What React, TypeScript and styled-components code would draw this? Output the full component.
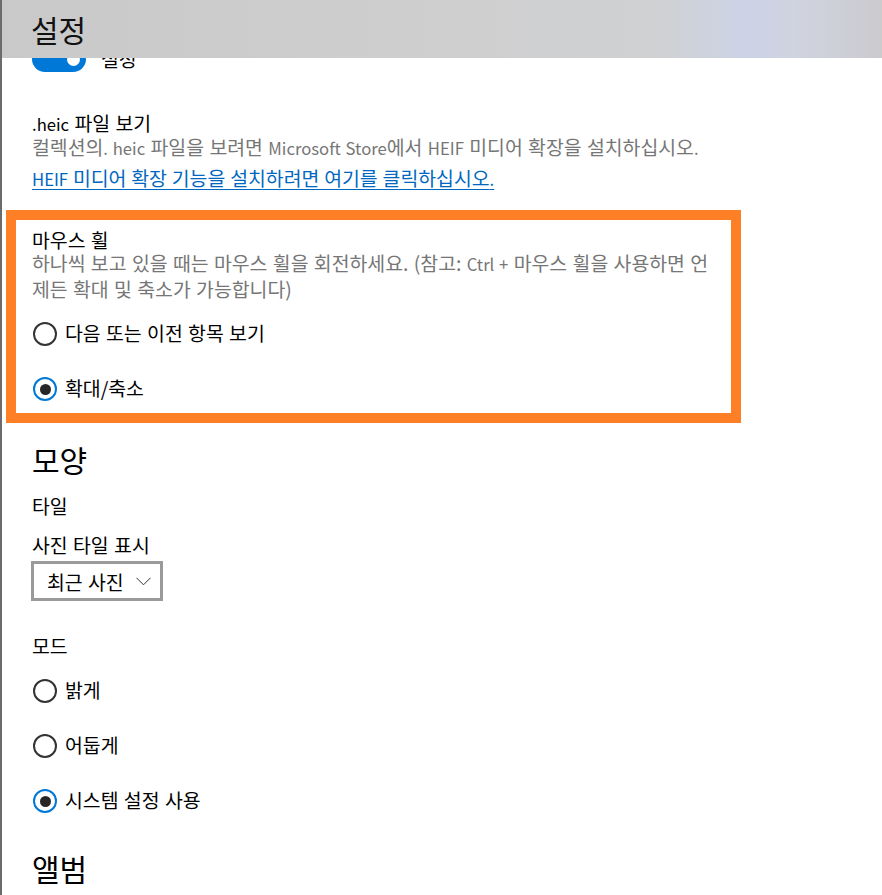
import React from "react";
import styled, { createGlobalStyle } from "styled-components";

const Global = createGlobalStyle`
  html, body { margin: 0; padding: 0; background: #ffffff; }
  body { font-family: "Noto Sans CJK KR", "Noto Sans", sans-serif; color: #000; }
`;

const Page = styled.div`
  min-height: 895px;
  border-left: 2px solid #6b6b6b;
  background: #fff;
  position: relative;
  overflow: hidden;
`;

const Header = styled.header`
  position: absolute;
  top: 0;
  left: 0;
  right: 0;
  height: 58px;
  z-index: 2;
  display: flex;
  align-items: center;
  padding-left: 29px;
  background: linear-gradient(
    90deg,
    #c9c9ca 0%,
    #cecece 45%,
    #d0d1d3 75%,
    #ccd3e6 85%,
    #d0d3e0 90%,
    #cbcbce 100%
  );
`;

const HeaderTitle = styled.h1`
  margin: 0;
  font-size: 30px;
  font-weight: 400;
  line-height: 36px;
  color: #111;
`;

const Main = styled.main`
  padding: 46px 0 0 4px;
  display: flex;
  flex-direction: column;
`;

const Section = styled.section<{ $mt?: number }>`
  padding-left: 26px;
  margin-top: ${(p) => p.$mt ?? 0}px;
  display: flex;
  flex-direction: column;
  align-items: flex-start;
`;

const ToggleRow = styled.div`
  display: flex;
  align-items: center;
  gap: 15px;
`;

const ToggleTrack = styled.div`
  width: 54px;
  height: 26px;
  border-radius: 13px;
  background: #0078d7;
  display: flex;
  align-items: center;
  justify-content: flex-end;
  padding-right: 6px;
  box-sizing: border-box;
`;

const ToggleKnob = styled.span`
  width: 13px;
  height: 13px;
  border-radius: 50%;
  background: #fff;
`;

const Text = styled.div<{ $mt?: number; $lh?: number }>`
  font-size: 19.4px;
  word-spacing: 1px;
  line-height: ${(p) => p.$lh ?? 24}px;
  margin-top: ${(p) => p.$mt ?? 0}px;
  color: #000;
`;

const Desc = styled.div<{ $lh?: number }>`
  font-size: 19.4px;
  word-spacing: 1px;
  line-height: ${(p) => p.$lh ?? 24}px;
  color: #767676;
  white-space: nowrap;
`;

const Latin = styled.span`
  font-size: 0.86em;
  line-height: 1;
`;

const Link = styled.a`
  margin-top: 7px;
  font-size: 19.4px;
  word-spacing: 0.5px;
  line-height: 24px;
  color: #0067c0;
  text-decoration: underline;
  text-underline-offset: 3px;
  text-decoration-thickness: 1px;
  cursor: pointer;
`;

const Highlight = styled.section`
  margin-top: 20px;
  width: 735px;
  height: 213px;
  flex-shrink: 0;
  box-sizing: border-box;
  border: 10px solid #ff7f27;
  padding: 10px 0 0 16px;
  display: flex;
  flex-direction: column;
  align-items: flex-start;
`;

const RadioGroup = styled.div<{ $mt?: number }>`
  margin-top: ${(p) => p.$mt ?? 0}px;
  display: flex;
  flex-direction: column;
  gap: 15px;
`;

const RadioRow = styled.label`
  height: 40px;
  display: flex;
  align-items: center;
  gap: 8px;
  font-size: 19.4px;
  word-spacing: 1px;
  line-height: 24px;
  color: #000;
`;

const RadioCircle = styled.span<{ $checked?: boolean }>`
  width: 24px;
  height: 24px;
  box-sizing: border-box;
  border-radius: 50%;
  border: 2.5px solid ${(p) => (p.$checked ? "#0078d7" : "#333333")};
  display: flex;
  align-items: center;
  justify-content: center;
  margin-left: 1px;

  &::after {
    content: "";
    width: 11px;
    height: 11px;
    border-radius: 50%;
    background: #262626;
    display: ${(p) => (p.$checked ? "block" : "none")};
  }
`;

const RadioLabel = styled.span`
  transform: translateY(-1px);
`;

const Heading = styled.h2<{ $mt?: number }>`
  margin: ${(p) => p.$mt ?? 0}px 0 0 0;
  font-size: 30px;
  font-weight: 400;
  line-height: 36px;
  color: #000;
`;

const Dropdown = styled.div`
  margin-top: 4px;
  width: 132px;
  height: 40px;
  flex-shrink: 0;
  box-sizing: border-box;
  border: 3px solid #9a9a9a;
  margin-left: -1px;
  display: flex;
  align-items: center;
  padding-left: 13px;
  gap: 12px;
  font-size: 19.4px;
  word-spacing: 1px;
  background: #fff;
`;

const Radio: React.FC<{ label: string; checked?: boolean }> = ({ label, checked }) => (
  <RadioRow>
    <RadioCircle $checked={checked} />
    <RadioLabel>{label}</RadioLabel>
  </RadioRow>
);

export default function App() {
  return (
    <>
      <Global />
      <Page>
        <Header>
          <HeaderTitle>설정</HeaderTitle>
        </Header>
        <Main>
          <Section>
            <ToggleRow>
              <ToggleTrack>
                <ToggleKnob />
              </ToggleTrack>
              <Text>설정</Text>
            </ToggleRow>
          </Section>

          <Section $mt={39}>
            <Text>
              <Latin>.heic</Latin> 파일 보기
            </Text>
            <Desc>
              컬렉션의<Latin>. heic</Latin> 파일을 보려면 <Latin>Microsoft Store</Latin>에서{" "}
              <Latin>HEIF</Latin> 미디어 확장을 설치하십시오<Latin>.</Latin>
            </Desc>
            <Link>
              <Latin>HEIF</Latin> 미디어 확장 기능을 설치하려면 여기를 클릭하십시오<Latin>.</Latin>
            </Link>
          </Section>

          <Highlight>
            <Text $lh={20}>마우스 휠</Text>
            <Desc $lh={26}>
              하나씩 보고 있을 때는 마우스 휠을 회전하세요. (참고: <Latin>Ctrl +</Latin> 마우스 휠을 사용하면 언
              <br />
              제든 확대 및 축소가 가능합니다)
            </Desc>
            <RadioGroup $mt={12}>
              <Radio label="다음 또는 이전 항목 보기" />
              <Radio label="확대/축소" checked />
            </RadioGroup>
          </Highlight>

          <Section $mt={18}>
            <Heading>모양</Heading>
            <Text $mt={17}>타일</Text>
            <Text $mt={15}>사진 타일 표시</Text>
            <Dropdown>
              <span>최근 사진</span>
              <svg width="15" height="9" viewBox="0 0 15 9" aria-hidden="true">
                <polyline points="0.5,0.8 7.5,7.8 14.5,0.8" fill="none" stroke="#333" strokeWidth="1" />
              </svg>
            </Dropdown>
            <Text $mt={33}>모드</Text>
            <RadioGroup $mt={13}>
              <Radio label="밝게" />
              <Radio label="어둡게" />
              <Radio label="시스템 설정 사용" checked />
            </RadioGroup>
            <Heading $mt={29}>앨범</Heading>
          </Section>
        </Main>
      </Page>
    </>
  );
}
